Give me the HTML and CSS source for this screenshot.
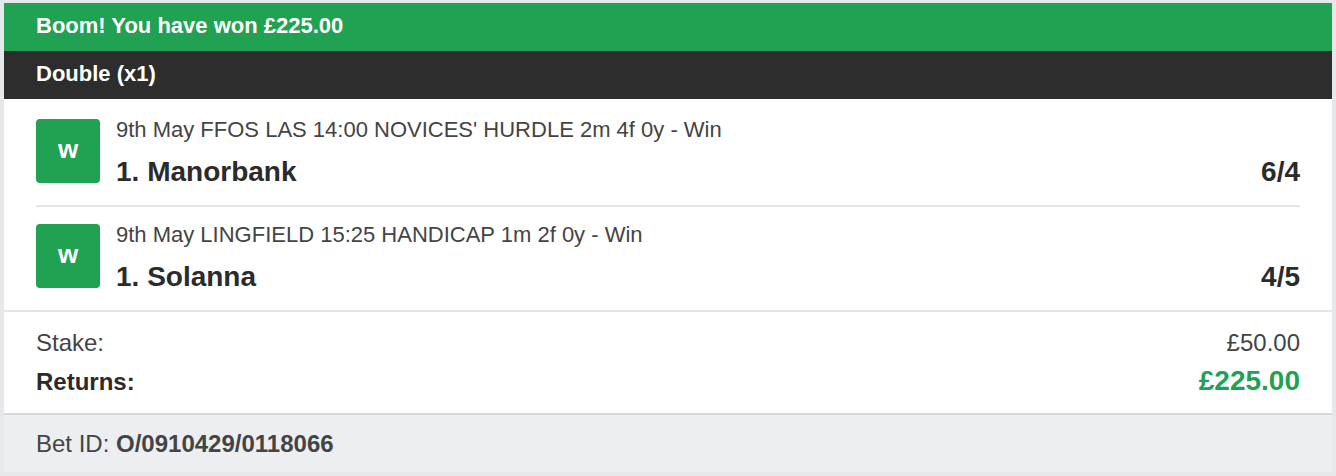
FILE: index.html
```html
<!DOCTYPE html>
<html>
<head>
<meta charset="utf-8">
<link rel="stylesheet" href="styles.css">
</head>
<body>
<div class="card">
  <div class="win-banner">Boom! You have won £225.00</div>
  <div class="bet-type">Double (x1)</div>
  <div class="selections">
    <div class="selection">
      <div class="badge">w</div>
      <div class="sel-info">
        <div class="sel-desc">9th May FFOS LAS 14:00 NOVICES' HURDLE 2m 4f 0y - Win</div>
        <div class="sel-main">
          <span class="sel-name">1. Manorbank</span>
          <span class="sel-odds">6/4</span>
        </div>
      </div>
    </div>
    <div class="selection">
      <div class="badge">w</div>
      <div class="sel-info">
        <div class="sel-desc">9th May LINGFIELD 15:25 HANDICAP 1m 2f 0y - Win</div>
        <div class="sel-main">
          <span class="sel-name">1. Solanna</span>
          <span class="sel-odds">4/5</span>
        </div>
      </div>
    </div>
  </div>
  <div class="totals">
    <div class="total-row">
      <span>Stake:</span>
      <span>£50.00</span>
    </div>
    <div class="total-row returns">
      <span>Returns:</span>
      <span class="returns-value">£225.00</span>
    </div>
  </div>
  <div class="bet-id">Bet ID: <strong>O/0910429/0118066</strong></div>
</div>
</body>
</html>
```

FILE: styles.css
```css
* { box-sizing: border-box; }
html, body { margin: 0; padding: 0; }
body {
  background: #e6e8ec;
  font-family: "Liberation Sans", Arial, sans-serif;
  color: #333;
  padding: 3px 4px 4px 4px;
}
.card {
  background: #fff;
}
.win-banner {
  background: #21a152;
  color: #fff;
  font-weight: bold;
  font-size: 22px;
  height: 48px;
  line-height: 46px;
  padding-left: 32px;
}
.bet-type {
  background: #2d2d2d;
  color: #fff;
  font-weight: bold;
  font-size: 22px;
  height: 48px;
  line-height: 46px;
  padding-left: 32px;
}
.selections {
  padding: 0 32px;
  border-bottom: 2px solid #e3e5e8;
}
.selection {
  display: flex;
  align-items: flex-start;
  gap: 16px;
  padding: 20px 0 17px;
}
.selection + .selection {
  border-top: 2px solid #e3e5e8;
  padding-top: 17px;
}
.badge {
  width: 64px;
  height: 64px;
  flex: none;
  background: #21a152;
  color: #fff;
  border-radius: 4px;
  display: flex;
  align-items: center;
  justify-content: center;
  font-weight: bold;
  font-size: 26px;
  padding-bottom: 3px;
}
.sel-info {
  flex: 1;
}
.sel-desc {
  font-size: 22px;
  color: #444;
  line-height: 22px;
}
.sel-main {
  display: flex;
  justify-content: space-between;
  margin-top: 15px;
  font-size: 28px;
  font-weight: bold;
  color: #2b2b2b;
  line-height: 32px;
}
.totals {
  padding: 17px 32px 15px;
  border-bottom: 2px solid #d6d8db;
}
.total-row {
  display: flex;
  justify-content: space-between;
  align-items: baseline;
  font-size: 24px;
  color: #444;
  line-height: 28px;
}
.total-row.returns {
  margin-top: 8px;
  font-weight: bold;
  color: #2b2b2b;
  line-height: 32px;
}
.returns-value {
  color: #21a152;
  font-size: 28px;
}
.bet-id {
  background: #eceef2;
  font-size: 24px;
  color: #444;
  height: 57px;
  line-height: 57px;
  padding-left: 32px;
}
.bet-id strong {
  color: #444;
}
```
